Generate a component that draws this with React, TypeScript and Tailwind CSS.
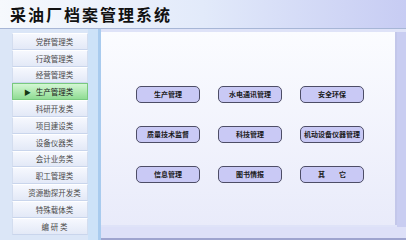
const menu = [
  "党群管理类",
  "行政管理类",
  "经营管理类",
  "生产管理类",
  "科研开发类",
  "项目建设类",
  "设备仪器类",
  "会计业务类",
  "职工管理类",
  "资源勘探开发类",
  "特殊载体类",
  "编 研 类",
];

const modules = [
  "生产管理",
  "水电通讯管理",
  "安全环保",
  "质量技术监督",
  "科技管理",
  "机动设备仪器管理",
  "信息管理",
  "图书情报",
  "其　　它",
];

export default function App() {
  const active = "生产管理类";

  return (
    <div className="w-[406px] h-[240px] flex flex-col bg-[#dfe3f8] font-['Noto_Sans_CJK_SC',sans-serif] overflow-hidden">
      {/* Header */}
      <div className="h-[29px] shrink-0 flex items-center pl-[10px] bg-gradient-to-r from-[#f6f9fd] via-[#e2eafa] to-[#c7ccf3] border-b border-[#a7b6d6]">
        <h1 className="text-[16px] font-bold tracking-[2px] text-[#111] leading-none">
          采油厂档案管理系统
        </h1>
      </div>

      <div className="flex-1 flex min-h-0">
        {/* Sidebar */}
        <div className="w-[101px] shrink-0 flex bg-[#dbe6f7]">
          <div className="w-[88px] pl-[12px] pt-[4px] flex flex-col">
            {menu.map((item) => {
              const isActive = item === active;
              return (
                <div
                  key={item}
                  className={
                    isActive
                      ? "relative h-[16.8px] flex items-center justify-center pl-[9px] text-[7.5px] text-[#1a1a1a] bg-gradient-to-b from-[#d4f7d4] to-[#8fdc93] border border-[#79c97f]"
                      : "relative h-[16.8px] flex items-center justify-center pl-[9px] text-[7.5px] text-[#4a4a4a] bg-gradient-to-b from-[#f6f8fe] to-[#e3e9f7] border-x border-x-[#d3ddef] border-t border-t-white border-b border-b-[#c9d5ec]"
                  }
                >
                  {isActive && (
                    <span className="absolute left-[11px] text-[7px] text-[#143814]">▶</span>
                  )}
                  {item}
                </div>
              );
            })}
          </div>
          <div className="w-[10px] bg-[#cde2f8]" />
          <div className="w-[3px] bg-[#a9cbee]" />
        </div>

        {/* Main */}
        <div className="flex-1 flex flex-col pt-[3px]">
          <div className="flex flex-1 min-h-0">
            <div className="w-[296px] h-[193px] bg-gradient-to-b from-[#fbfcff] to-[#e9ebfa] border-r-2 border-[#c3c7ea] pl-[35px] pt-[54px]">
              <div className="grid grid-cols-[64px_64px_64px] gap-x-[18px] gap-y-[23px]">
                {modules.map((m) => (
                  <button
                    key={m}
                    className="h-[17px] rounded-[5px] border border-[#4d4d66] bg-[#c9c9f5] text-[7px] font-bold text-[#1a1a1a] leading-none flex items-center justify-center whitespace-pre"
                  >
                    {m}
                  </button>
                ))}
              </div>
            </div>
            <div className="flex-1 bg-[#c9cdf1]" />
          </div>
          <div className="h-[13px] shrink-0 bg-[#dde0f8] border-b-2 border-[#9ea4cf]" />
        </div>
      </div>
    </div>
  );
}
